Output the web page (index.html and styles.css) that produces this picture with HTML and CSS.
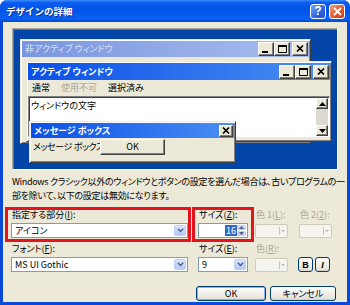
FILE: index.html
```html
<!DOCTYPE html>
<html>
<head>
  <meta charset="utf-8">
  <title>デザインの詳細</title>
  <link rel="stylesheet" href="styles.css">
</head>
<body>

<div class="dialog">
  <div class="titlebar">
    <span class="title">デザインの詳細</span>
    <span class="cap help">?</span>
    <span class="cap close">
      <svg width="9" height="9" viewBox="0 0 9 9"><path d="M1 1L8 8M8 1L1 8" stroke="#fff" stroke-width="1.8"/></svg>
    </span>
  </div>

  <div class="client">
    <!-- scheme preview -->
    <div class="preview">
      <div class="win inactive">
        <div class="wtitle">
          <span class="wname">非アクティブ ウィンドウ</span>
          <span class="wbtn"><svg width="14" height="12" viewBox="0 0 14 12"><rect x="3" y="8" width="6" height="2"/></svg></span>
          <span class="wbtn"><svg width="14" height="12" viewBox="0 0 14 12"><path d="M3.5 2.5h8v7h-8z" fill="none" stroke="#000"/><rect x="3" y="2" width="9" height="2"/></svg></span>
          <span class="wbtn last"><svg width="14" height="12" viewBox="0 0 14 12"><path d="M4 2.5L10 8.5M10 2.5L4 8.5" stroke="#000" stroke-width="1.7"/></svg></span>
        </div>
      </div>

      <div class="win active">
        <div class="wtitle big">
          <span class="wname">アクティブ ウィンドウ</span>
          <span class="wbtn"><svg width="14" height="12" viewBox="0 0 14 12"><rect x="3" y="8" width="6" height="2"/></svg></span>
          <span class="wbtn"><svg width="14" height="12" viewBox="0 0 14 12"><path d="M3.5 2.5h8v7h-8z" fill="none" stroke="#000"/><rect x="3" y="2" width="9" height="2"/></svg></span>
          <span class="wbtn last"><svg width="14" height="12" viewBox="0 0 14 12"><path d="M4 2.5L10 8.5M10 2.5L4 8.5" stroke="#000" stroke-width="1.7"/></svg></span>
        </div>
        <div class="menu">
          <span>通常</span>
          <span class="dis">使用不可</span>
          <span>選択済み</span>
        </div>
        <div class="wtext">
          <span class="wtext-body">ウィンドウの文字</span>
          <div class="vscroll">
            <span class="sbtn"><svg width="7" height="4" viewBox="0 0 7 4"><path d="M3.5 0L7 4H0z"/></svg></span>
            <span class="strack"></span>
            <span class="sbtn"><svg width="7" height="4" viewBox="0 0 7 4"><path d="M0 0H7L3.5 4z"/></svg></span>
          </div>
        </div>
      </div>

      <div class="win msgbox">
        <div class="wtitle">
          <span class="wname">メッセージ ボックス</span>
          <span class="wbtn small"><svg width="12" height="10" viewBox="0 0 12 10"><path d="M3 1.5L9 7.5M9 1.5L3 7.5" stroke="#000" stroke-width="1.7"/></svg></span>
        </div>
        <div class="msgbody">メッセージ ボックスの文字</div>
        <span class="msgok">OK</span>
      </div>
    </div>

    <p class="note">Windows クラシック以外のウィンドウとボタンの設定を選んだ場合は、古いプログラムの一<br>部を除いて、以下の設定は無効になります。</p>

    <div class="settings">
      <span class="lbl">指定する部分(<u>I</u>):</span>
      <span class="lbl">サイズ(<u>Z</u>):</span>
      <span class="lbl off">色 1(<u>L</u>):</span>
      <span class="lbl off">色 2(<u>2</u>):</span>

      <div class="combo w-part">アイコン
        <span class="drop"><svg width="7" height="5" viewBox="0 0 7 5"><path d="M0.8 0.8L3.5 3.5L6.2 0.8" fill="none" stroke="#4d6185" stroke-width="1.5"/></svg></span>
      </div>
      <div class="combo spin w-size">
        <span class="sel">16</span>
        <span class="spinbtns">
          <span class="sp"><svg width="5" height="3" viewBox="0 0 5 3"><path d="M2.5 0L5 3H0z" fill="#4d6185"/></svg></span>
          <span class="sp"><svg width="5" height="3" viewBox="0 0 5 3"><path d="M0 0H5L2.5 3z" fill="#4d6185"/></svg></span>
        </span>
      </div>
      <span class="cbtn"><span class="carrow"></span></span>
      <span class="cbtn"><span class="carrow"></span></span>

      <span class="lbl low">フォント(<u>F</u>):</span>
      <span class="lbl low">サイズ(<u>E</u>):</span>
      <span class="lbl low off">色(<u>R</u>):</span>
      <span></span>

      <div class="combo w-part">MS UI Gothic
        <span class="drop"><svg width="7" height="5" viewBox="0 0 7 5"><path d="M0.8 0.8L3.5 3.5L6.2 0.8" fill="none" stroke="#4d6185" stroke-width="1.5"/></svg></span>
      </div>
      <div class="combo w-size">9
        <span class="drop"><svg width="7" height="5" viewBox="0 0 7 5"><path d="M0.8 0.8L3.5 3.5L6.2 0.8" fill="none" stroke="#4d6185" stroke-width="1.5"/></svg></span>
      </div>
      <span class="cbtn"><span class="carrow"></span></span>
      <div class="styles">
        <button class="xpbtn sq bold">B</button>
        <button class="xpbtn sq ital">I</button>
      </div>

      <!-- red annotation frames -->
      <div class="mark mark-part"></div>
      <div class="mark mark-size"></div>
    </div>

    <div class="actions">
      <button class="xpbtn def b-ok">OK</button>
      <button class="xpbtn b-cancel">キャンセル</button>
    </div>
  </div>
</div>

</body>
</html>
```

FILE: styles.css
```css
* {
  box-sizing: border-box;
}
body {
  margin: 0;
  font-family: "Noto Sans CJK JP", "Noto Sans", sans-serif;
  font-size: 9px;
  line-height: 12px;
  font-feature-settings: "palt";
  color: #000;
}
.dialog {
  width: 350px;
  height: 305px;
  display: flex;
  flex-direction: column;
  background: #0a48d8;
  border-radius: 7px 7px 0 0;
  overflow: hidden;
}

/* title bar */
.titlebar {
  flex: none;
  height: 22px;
  display: flex;
  align-items: center;
  gap: 3px;
  padding: 0 5px 0 6px;
  background: linear-gradient(#3d8cf8 0%, #0b5cf0 12%, #0054e6 45%, #0a61f2 85%, #0047d6 100%);
}
.title {
  flex: 1;
  color: #fff;
  font-size: 9.5px;
  font-weight: bold;
  font-feature-settings: normal;
  text-shadow: 1px 1px #0b2d9c;
}
.cap {
  width: 16px;
  height: 15px;
  border: 1px solid #fff;
  border-radius: 3px;
  display: flex;
  align-items: center;
  justify-content: center;
}
.help {
  background: linear-gradient(135deg, #7aa6fa, #2c62e0 60%, #1d4fd0);
  color: #fff;
  font-family: "Liberation Sans", sans-serif;
  font-weight: bold;
  font-size: 12px;
}
.close {
  background: linear-gradient(135deg, #f2a484, #e0592f 55%, #c83c14);
}

.client {
  flex: 1;
  margin: 0 3px 3px;
  padding: 6px 11px 0 9px;
  background: #ece9d8;
  display: flex;
  flex-direction: column;
}

/* preview */
.preview {
  position: relative;
  flex: none;
  width: 326px;
  height: 142px;
  background: #0446a8;
  border: 1px solid;
  border-color: #aca899 #fff #fff #aca899;
  box-shadow: inset 1px 1px #716f64;
  overflow: hidden;
}
.win {
  position: absolute;
  padding: 1px;
  background: #ece9d8;
  border: 1px solid;
  border-color: #ece9d8 #404040 #404040 #ece9d8;
  box-shadow: inset 1px 1px #fff, inset -1px -1px #808080;
}
.inactive {
  left: 7px;
  top: 10px;
  width: 291px;
  height: 105px;
}
.active {
  left: 13px;
  top: 32px;
  width: 306px;
  height: 81px;
}
.msgbox {
  left: 16px;
  top: 92px;
  width: 207px;
  height: 42px;
}
.wtitle {
  height: 15px;
  display: flex;
  align-items: center;
  padding: 0 1px 0 3px;
  color: #fff;
  font-weight: bold;
  background: linear-gradient(to right, #0a50e6, #4a8ef4);
}
.wtitle.big {
  height: 17px;
}
.inactive .wtitle {
  height: 16px;
  color: #d8e4f8;
  font-weight: normal;
  background: linear-gradient(to right, #7a96df, #a9bdee);
}
.wname {
  flex: 1;
  white-space: nowrap;
}
.wbtn {
  width: 16px;
  height: 14px;
  background: #ece9d8;
  border: 1px solid;
  border-color: #fff #404040 #404040 #fff;
  box-shadow: inset -1px -1px #808080;
  display: flex;
  align-items: center;
  justify-content: center;
}
.wbtn.last {
  margin-left: 2px;
}
.wbtn.small {
  width: 14px;
  height: 12px;
}
.menu {
  height: 16px;
  display: flex;
  align-items: center;
  gap: 11px;
  padding-left: 4px;
}
.dis {
  color: #aca899;
}
.wtext {
  height: 41px;
  display: flex;
  background: #fff;
  border: 1px solid;
  border-color: #808080 #fff #fff #808080;
  box-shadow: inset 1px 1px #404040;
}
.wtext-body {
  flex: 1;
  padding: 3px 0 0 2px;
}
.vscroll {
  width: 13px;
  display: flex;
  flex-direction: column;
  padding: 1px 1px 0 0;
}
.sbtn {
  height: 11px;
  background: #ece9d8;
  border: 1px solid;
  border-color: #fff #404040 #404040 #fff;
  box-shadow: inset -1px -1px #808080;
  display: flex;
  align-items: center;
  justify-content: center;
}
.strack {
  flex: 1;
  background: #dcdad0;
}
.msgbody {
  width: 69px;
  padding: 3px 0 0 2px;
  letter-spacing: -0.4px;
  white-space: nowrap;
  overflow: hidden;
}
.msgok {
  position: absolute;
  left: 70px;
  top: 17px;
  width: 65px;
  height: 16px;
  background: #ece9d8;
  border: 1px solid;
  border-color: #fff #404040 #404040 #fff;
  box-shadow: inset -1px -1px #808080;
  display: flex;
  align-items: center;
  justify-content: center;
}

.note {
  margin: 5px 0 0;
  line-height: 14px;
  letter-spacing: -0.3px;
  white-space: nowrap;
}

/* settings */
.settings {
  position: relative;
  display: grid;
  grid-template-columns: 187px 57px 44px 1fr;
  grid-template-rows: 12px 15px 15px 15px;
  row-gap: 2px;
  margin: 6px 0 0 -1px;
}
.lbl {
  padding-left: 1px;
  white-space: nowrap;
}
.lbl.low {
  align-self: end;
}
.off {
  color: #aca899;
}
.combo {
  position: relative;
  height: 15px;
  background: #fff;
  border: 1px solid #7f9db9;
  padding-left: 3px;
  display: flex;
  align-items: center;
  white-space: nowrap;
}
.w-part {
  width: 177px;
}
.w-size {
  width: 50px;
}
.drop {
  position: absolute;
  right: 1px;
  top: 1px;
  bottom: 1px;
  width: 12px;
  border-radius: 2px;
  border: 1px solid #bccdf6;
  background: linear-gradient(#dbe5fd, #b4c9f8);
  display: flex;
  align-items: center;
  justify-content: center;
}
.spin {
  justify-content: flex-end;
  padding-right: 10px;
}
.sel {
  background: #316ac5;
  color: #fff;
  padding: 0 1px;
  line-height: 11px;
}
.spinbtns {
  position: absolute;
  right: 1px;
  top: 1px;
  bottom: 1px;
  width: 9px;
  display: flex;
  flex-direction: column;
  gap: 1px;
}
.sp {
  flex: 1;
  border-radius: 2px;
  border: 1px solid #bccdf6;
  background: linear-gradient(#dbe5fd, #b4c9f8);
  display: flex;
  align-items: center;
  justify-content: center;
}
.cbtn {
  width: 33px;
  height: 14px;
  align-self: center;
  border: 1px solid #cdcbbe;
  border-radius: 2px;
  background: #f5f4ee;
  display: flex;
  justify-content: flex-end;
  align-items: center;
  padding-right: 2px;
}
.carrow {
  width: 6px;
  height: 8px;
  border-left: 1px solid #c4c2b6;
  position: relative;
}
.carrow::after {
  content: "";
  position: absolute;
  left: 1px;
  top: 3px;
  border: 2px solid transparent;
  border-top: 2px solid #b8b6aa;
}
.styles {
  display: flex;
  gap: 2px;
  margin-left: -1px;
}
.mark {
  position: absolute;
  top: -2px;
  height: 35px;
  border: 3px solid #e3141d;
}
.mark-part {
  left: -6px;
  width: 186px;
}
.mark-size {
  left: 181px;
  width: 62px;
}

/* buttons */
.xpbtn {
  height: 15px;
  padding: 0;
  font: inherit;
  color: #000;
  border: 1px solid #003c74;
  border-radius: 3px;
  background: linear-gradient(#fff, #f3f2ec 40%, #e6e4da 85%, #d6d0c5);
  display: flex;
  align-items: center;
  justify-content: center;
}
.xpbtn.def {
  box-shadow: inset 0 0 0 1px #8cb0f0;
}
.sq {
  width: 15px;
  font-family: "Liberation Sans", sans-serif;
  font-weight: bold;
  font-size: 9px;
}
.ital {
  font-style: italic;
}
.actions {
  display: flex;
  justify-content: flex-end;
  gap: 4px;
  margin-top: 14px;
}
.b-ok {
  width: 70px;
}
.b-cancel {
  width: 66px;
}
```
